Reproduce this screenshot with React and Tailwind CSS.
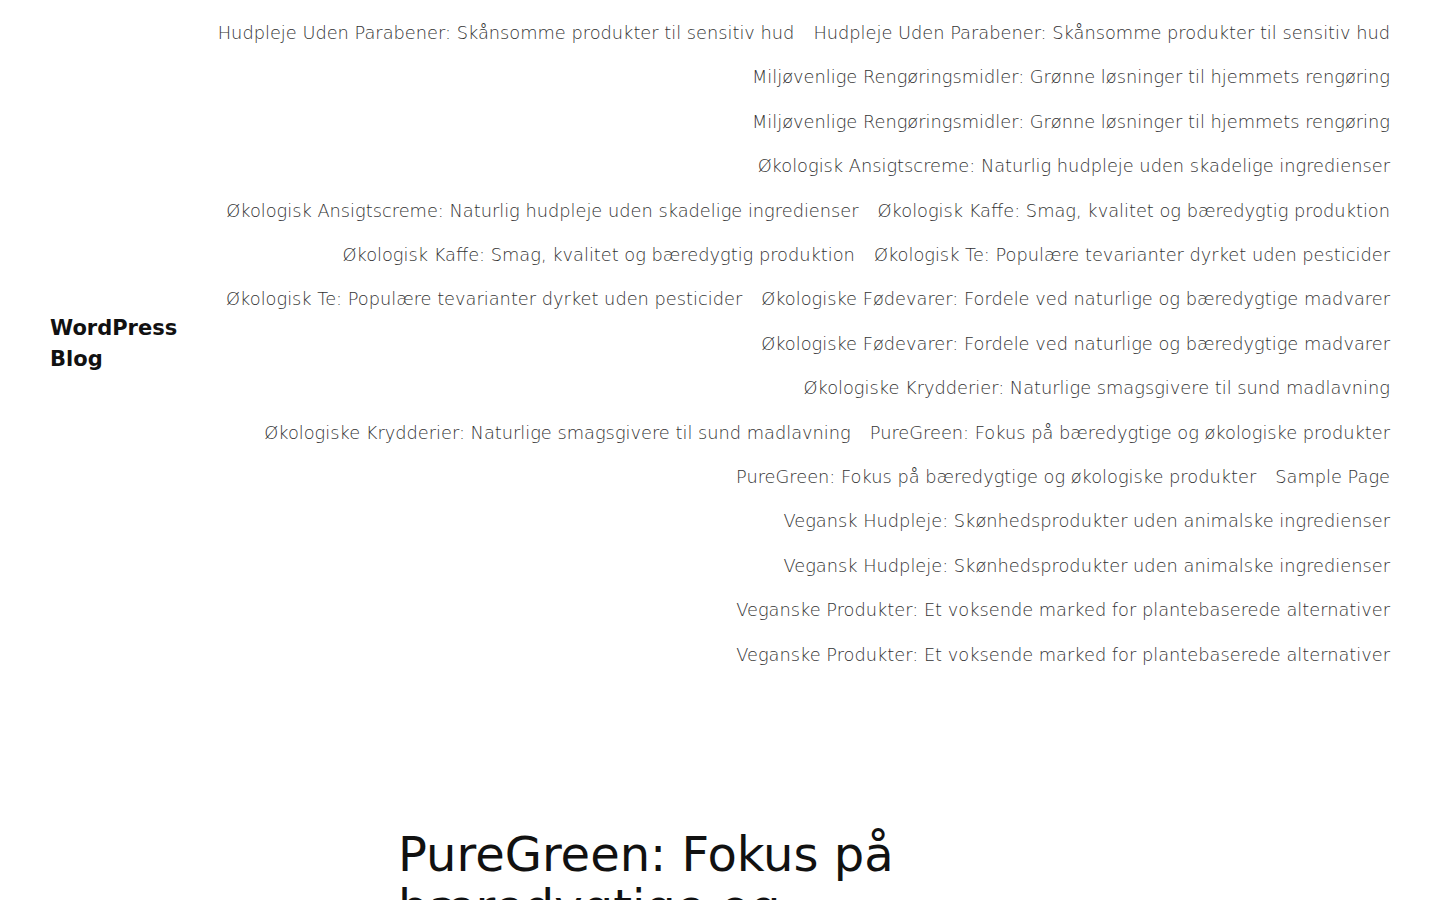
const navRows = [
  ['Hudpleje Uden Parabener: Skånsomme produkter til sensitiv hud', 'Hudpleje Uden Parabener: Skånsomme produkter til sensitiv hud'],
  ['Miljøvenlige Rengøringsmidler: Grønne løsninger til hjemmets rengøring'],
  ['Miljøvenlige Rengøringsmidler: Grønne løsninger til hjemmets rengøring'],
  ['Økologisk Ansigtscreme: Naturlig hudpleje uden skadelige ingredienser'],
  ['Økologisk Ansigtscreme: Naturlig hudpleje uden skadelige ingredienser', 'Økologisk Kaffe: Smag, kvalitet og bæredygtig produktion'],
  ['Økologisk Kaffe: Smag, kvalitet og bæredygtig produktion', 'Økologisk Te: Populære tevarianter dyrket uden pesticider'],
  ['Økologisk Te: Populære tevarianter dyrket uden pesticider', 'Økologiske Fødevarer: Fordele ved naturlige og bæredygtige madvarer'],
  ['Økologiske Fødevarer: Fordele ved naturlige og bæredygtige madvarer'],
  ['Økologiske Krydderier: Naturlige smagsgivere til sund madlavning'],
  ['Økologiske Krydderier: Naturlige smagsgivere til sund madlavning', 'PureGreen: Fokus på bæredygtige og økologiske produkter'],
  ['PureGreen: Fokus på bæredygtige og økologiske produkter', 'Sample Page'],
  ['Vegansk Hudpleje: Skønhedsprodukter uden animalske ingredienser'],
  ['Vegansk Hudpleje: Skønhedsprodukter uden animalske ingredienser'],
  ['Veganske Produkter: Et voksende marked for plantebaserede alternativer'],
  ['Veganske Produkter: Et voksende marked for plantebaserede alternativer'],
]

const App = () => {
  return (
    <div className="min-h-screen bg-white text-[#111] font-['DejaVu_Sans',sans-serif]">
      <header className="flex items-center justify-between gap-6 px-[50px] pt-[11px]">
        <p className="w-[140px] shrink-0 text-[21px] font-bold leading-[31px]">
          <a href="#">WordPress Blog</a>
        </p>
        <nav className="flex flex-col items-end">
          {navRows.map((row, i) => (
            <ul key={i} className="flex justify-end gap-x-[19px]">
              {row.map((item, j) => (
                <li key={j} className="text-[17.8px] font-light leading-[44.4px] text-[#333] whitespace-nowrap">
                  <a href="#">{item}</a>
                </li>
              ))}
            </ul>
          ))}
        </nav>
      </header>

      <main className="mt-[151px] flex justify-center">
        <h1 className="w-[644px] text-[48px] font-normal leading-[1.1] text-[#111]">
          PureGreen: Fokus på bæredygtige og økologiske produkter
        </h1>
      </main>
    </div>
  )
}

export default App
